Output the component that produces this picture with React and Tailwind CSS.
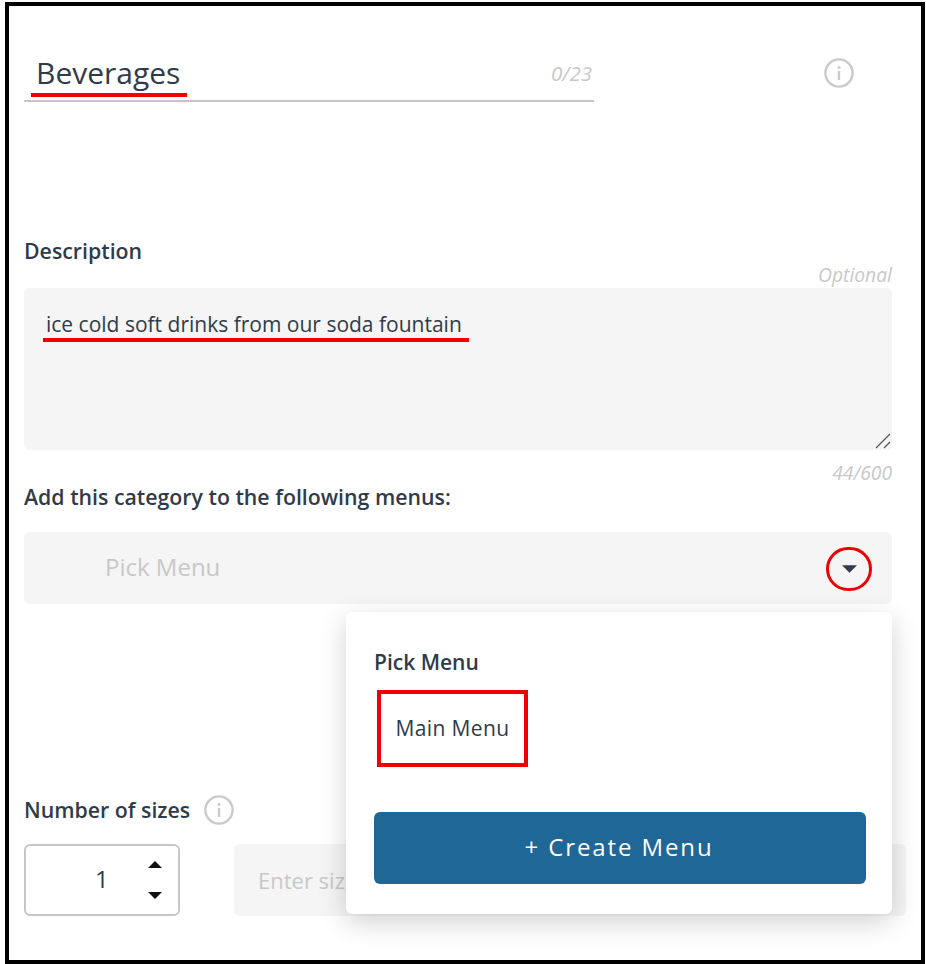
import React from 'react';

const InfoIcon = ({ className }) => (
  <svg viewBox="0 0 30 30" className={className} fill="none">
    <circle cx="15" cy="15" r="13.6" stroke="#cacaca" strokeWidth="2.4" />
    <circle cx="15" cy="9.6" r="1.5" fill="#cacaca" />
    <rect x="13.8" y="13" width="2.4" height="9" rx="0.6" fill="#cacaca" />
  </svg>
);

const Caret = ({ up, className }) => (
  <svg viewBox="0 0 14 7" className={className} fill="currentColor">
    <path d={up ? 'M7 0 L14 7 L0 7 Z' : 'M0 0 L14 0 L7 7 Z'} />
  </svg>
);

const App = () => {
  return (
    <div className="relative w-[926px] h-[964px] bg-white pt-[2px] pl-[5px] pr-[1px] font-['Open_Sans',sans-serif] text-[#2f3b4a] overflow-hidden">
      <div className="relative h-full border-[4px] border-black bg-white pl-[15px] pr-[29px]">
        <div className="flex items-start pt-[49px]">
          <div className="relative w-[570px] h-[47px] border-b-2 border-[#c6c6c6] pl-[12px] flex items-start justify-between">
            <span className="text-[30px] leading-[40px] mt-[-2px]">Beverages</span>
            <span className="mt-[6px] mr-[2px] text-[20.5px] leading-[24px] italic text-[#c8c8c8]">0/23</span>
            <div className="absolute left-[7px] top-[38px] w-[156px] h-[4px] bg-[#f00000]" />
          </div>
          <InfoIcon className="ml-[230px] mt-[3px] w-[30px] h-[30px]" />
        </div>

        <div className="mt-[135px] text-[21.3px] leading-[28px] font-semibold">Description</div>
        <div className="mt-[-2px] text-right text-[19.3px] leading-[24px] italic text-[#c8c8c8]">Optional</div>
        <div className="relative mt-[1px] h-[162px] rounded-[6px] bg-[#f5f5f5] pl-[22px] pt-[22px] text-[21px] leading-[28px]">
          ice cold soft drinks from our soda fountain
          <div className="absolute left-[19px] top-[50px] w-[426px] h-[4px] bg-[#f00000]" />
          <svg viewBox="0 0 16 16" className="absolute right-[1px] bottom-[1px] w-[16px] h-[16px]" stroke="#555" strokeWidth="1.2">
            <path d="M1 15 L15 1 M9 15 L15 9" />
          </svg>
        </div>
        <div className="mt-[11px] text-right text-[19.3px] leading-[24px] italic text-[#c8c8c8]">44/600</div>

        <div className="mt-[-2px] text-[21.3px] leading-[28px] font-semibold">Add this category to the following menus:</div>
        <div className="mt-[21px] h-[72px] rounded-[6px] bg-[#f5f5f5] pl-[81px] pr-[20px] flex items-center justify-between">
          <span className="text-[24px] text-[#c8c8c8] mt-[-2px]">Pick Menu</span>
          <div className="relative w-[46px] h-[44px] rounded-full border-[3px] border-[#f00000] flex items-center justify-center mt-[2px]">
            <Caret className="w-[15px] h-[8px] text-[#2f3b4a]" />
          </div>
        </div>

        <div className="mt-[191px] flex items-center text-[21.3px] leading-[28px] font-semibold">
          Number of sizes
          <InfoIcon className="ml-[14px] w-[30px] h-[30px]" />
        </div>
        <div className="mt-[19px] flex">
          <div className="w-[156px] h-[72px] shrink-0 rounded-[6px] border-2 border-[#c6c6c6] flex items-center pl-[69px] pr-[16px] justify-between">
            <span className="text-[24px] mt-[-2px]">1</span>
            <div className="flex flex-col gap-[24px] text-[#111]">
              <Caret up className="w-[14px] h-[7px]" />
              <Caret className="w-[14px] h-[7px]" />
            </div>
          </div>
          <div className="ml-[54px] w-[672px] h-[72px] shrink-0 rounded-[6px] bg-[#f5f5f5] pl-[24px] flex items-center text-[22px] text-[#c8c8c8]">
            Enter size
          </div>
        </div>

        <div className="absolute left-[337px] top-[606px] w-[546px] h-[302px] rounded-[6px] bg-white shadow-[0_8px_28px_rgba(0,0,0,0.18)] pl-[28px] pr-[26px] pt-[36px]">
          <div className="text-[21px] leading-[28px] font-semibold">Pick Menu</div>
          <div className="mt-[14px] ml-[3px] w-[151px] h-[77px] border-[4px] border-[#f00000] flex items-center justify-center text-[21px] tracking-[0.4px]">
            Main Menu
          </div>
          <button className="mt-[45px] w-full h-[72px] rounded-[6px] bg-[#1f6797] text-white text-[24px] tracking-[1.9px] pb-[2px] pr-[2px]">
            + Create Menu
          </button>
        </div>
      </div>
    </div>
  );
};

export default App;
